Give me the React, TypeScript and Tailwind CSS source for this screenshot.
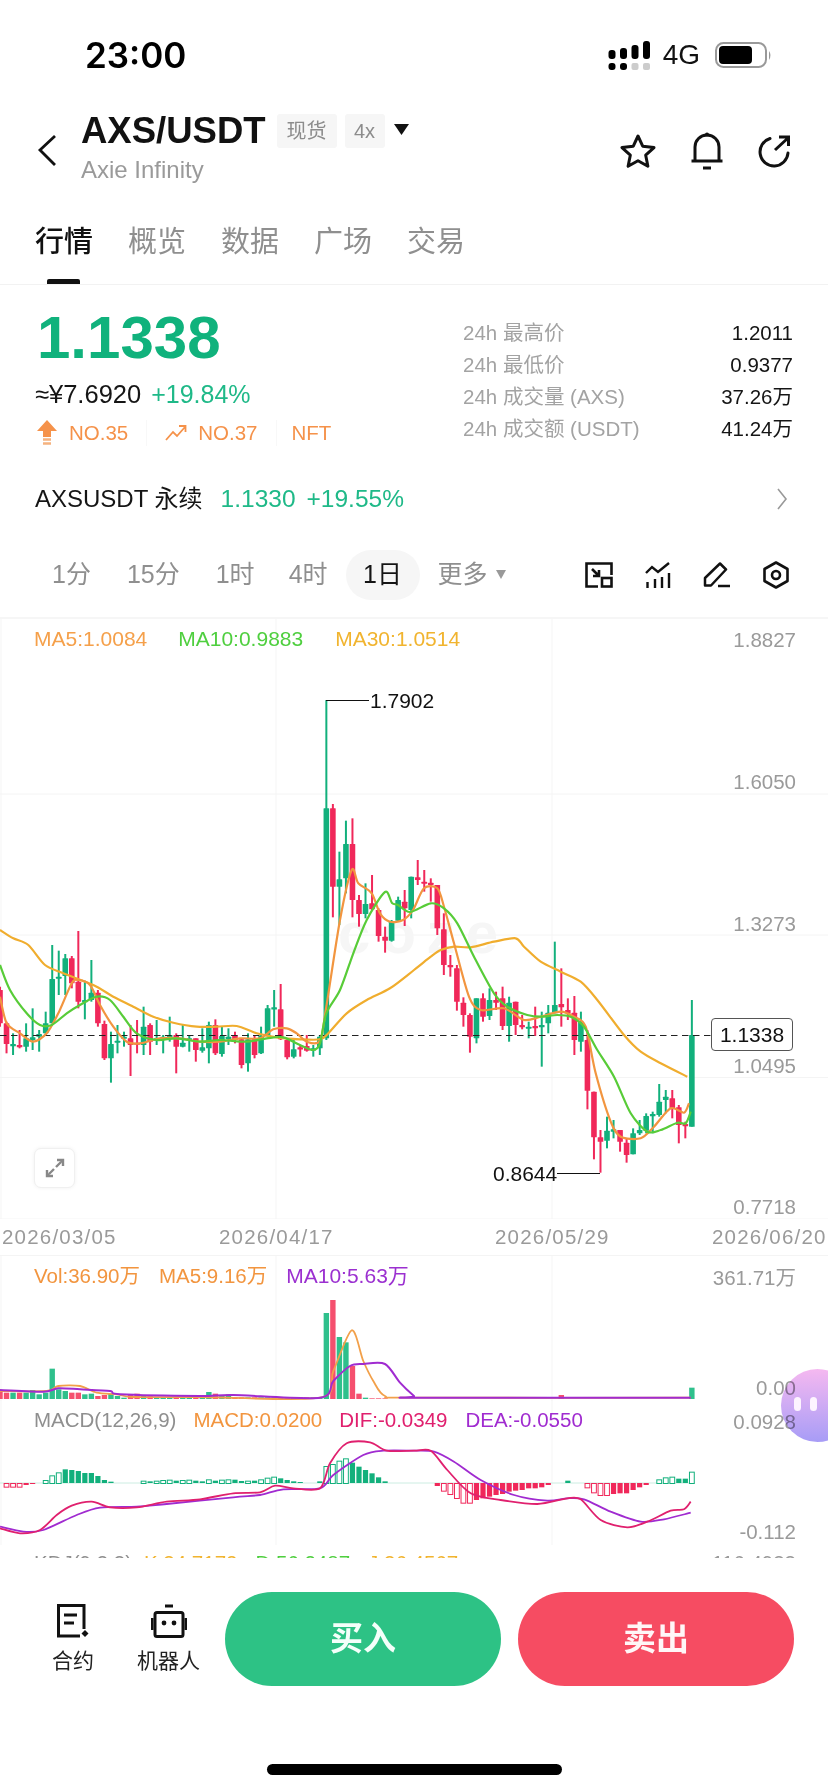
import React from "react";

const G = "#12b07c";
const R = "#f0285a";
type C = [string, number, number, number, number];

// colour, wick top, body top, body bottom, wick bottom (crop coordinates)
const part1: C[] = [
  ["r",920,930,1030,1040],["r",1025,1030,1092,1120],["g",1060,1092,1098,1125],["r",1050,1095,1102,1105],["g",1030,1075,1100,1115],
  ["g",985,1072,1080,1110],["g",1050,1062,1070,1115],["g",995,1030,1060,1065],["g",795,897,1030,1030],["g",812,890,895,945],
  ["g",822,835,888,945],["r",828,835,910,925],["r",753,905,965,985],["g",902,960,966,1018],["g",840,938,960,965],
  ["r",930,938,1030,1040],["r",1022,1032,1135,1140],["g",1055,1092,1135,1208],["g",1035,1082,1088,1120],["g",1055,1070,1075,1100],
  ["r",1035,1075,1095,1188],["r",1020,1088,1094,1120],["g",980,1040,1095,1125],["r",1030,1035,1085,1125],["g",1020,1075,1082,1095],
  ["g",1065,1070,1078,1120],["g",1010,1065,1072,1085],["r",1060,1065,1100,1180],["g",1035,1088,1100,1102],["g",1065,1075,1082,1115],
  ["r",1075,1075,1110,1145],["g",1045,1102,1112,1118],["g",1025,1035,1105,1150],["r",1018,1035,1120,1125],["g",1040,1068,1122,1130],
  ["g",1045,1070,1078,1095],["r",1055,1065,1080,1090],["r",1075,1078,1155,1165],["g",1060,1078,1150,1175],["r",1065,1075,1125,1135],
  ["g",1040,1068,1120,1122],["g",975,985,1065,1070],["g",930,982,988,1040],["r",912,988,1078,1080],["r",1075,1080,1132,1138],
  ["g",1080,1108,1130,1135],["r",1095,1102,1108,1130],["r",1065,1098,1112,1115],["g",1095,1105,1110,1130],["g",1065,1070,1105,1125],
  ["g",60,385,1075,1080],["r",372,385,620,712],["g",515,598,620,735],["g",422,492,595,640],["r",415,492,660,712],
  ["r",645,660,702,740],["g",610,672,702,715],["r",585,670,688,690],["r",685,690,768,785],["r",740,770,782,818],
  ["g",720,725,782,785],["g",650,660,722,725],["r",630,665,685,738],["g",590,590,690,715],
];
const part2: C[] = [
  ["r",120,172,180,195],["r",150,185,190,215],["r",175,188,195,245],["r",195,195,325,345],["r",280,328,435,465],
  ["r",405,435,442,470],["r",435,445,545,572],["r",532,548,585,620],["r",580,585,650,698],["g",535,535,655,670],
  ["r",520,535,590,605],["g",505,540,588,600],["r",515,540,548,570],["r",500,535,618,630],["g",530,548,618,665],
  ["r",545,545,615,645],["r",585,615,622,628],["g",605,620,625,655],["r",560,618,624,648],["g",575,615,622,740],
  ["g",555,578,610,640],["g",365,555,580,580],["r",445,552,562,620],["r",535,570,580,600],["r",528,578,660,705],
  ["g",575,605,665,695],["r",630,660,812,868],["r",815,815,952,1018],["r",930,952,965,1058],["g",890,932,962,985],
  ["g",900,928,935,955],["r",930,930,965,995],["r",955,968,1005,1028],["g",925,940,1003,1003],["g",900,930,940,945],
  ["g",880,888,932,940],["g",875,882,888,940],["g",792,845,885,890],["g",810,830,840,880],["r",810,835,865,895],
  ["r",855,862,915,970],["r",905,912,918,955],["g",540,645,920,920],
];
const candles = [
  ...part1.map((c) => [c[0], ...c.slice(1).map((v) => 680 + (v as number) / 3)]),
  ...part2.map((c) => [c[0], ...c.slice(1).map((v) => 820 + (v as number) / 3)]),
] as C[];
const cx = (i: number) => 6.527 * i;

const z3 = (p: number[][]) => p.map(([x, y]) => `${(x / 3).toFixed(1)},${(680 + y / 3).toFixed(1)}`).join(" ");
const z4 = (p: number[][]) => p.map(([x, y]) => `${(414 + x / 3).toFixed(1)},${(820 + y / 3).toFixed(1)}`).join(" ");
const z5 = (p: number[][]) => p.map(([x, y]) => `${(x / 3).toFixed(1)},${(1240 + y / 3).toFixed(1)}`).join(" ");
const z6 = (p: number[][]) => p.map(([x, y]) => `${(414 + x / 3).toFixed(1)},${(1240 + y / 3).toFixed(1)}`).join(" ");

// Catmull-Rom curve through the points
function smooth(points: string) {
  const p = points.trim().split(/\s+/).map((s) => s.split(",").map(Number));
  let d = `M${p[0][0]} ${p[0][1]}`;
  for (let i = 0; i < p.length - 1; i++) {
    const a = p[Math.max(i - 1, 0)], b = p[i], c = p[i + 1], e = p[Math.min(i + 2, p.length - 1)];
    const k = 1 / 7;
    d += ` C${(b[0] + (c[0] - a[0]) * k).toFixed(1)} ${(b[1] + (c[1] - a[1]) * k).toFixed(1)} ${(c[0] - (e[0] - b[0]) * k).toFixed(1)} ${(c[1] - (e[1] - b[1]) * k).toFixed(1)} ${c[0]} ${c[1]}`;
  }
  return d;
}

const ma30 = z3([[0,750],[40,775],[85,795],[135,855],[190,880],[280,915],[340,950],[400,980],[460,1010],[520,1028],[590,1040],[650,1040],[710,1038],[770,1060],[830,1072],[900,1078],[960,1078],[985,1060],[1040,1000],[1100,960],[1170,925],[1242,870]]) + " " +
  z4([[50,410],[80,390],[120,380],[170,382],[240,365],[305,355],[330,380],[380,425],[440,455],[500,485],[550,540],[630,645],[680,695],[740,730],[820,770]]);
const ma5 = z3([[0,950],[20,1030],[60,1060],[100,1085],[140,1060],[175,1000],[215,910],[235,900],[270,915],[300,975],[340,1040],[380,1085],[420,1090],[480,1075],[540,1075],[600,1085],[660,1085],[720,1075],[780,1075],[820,1048],[860,1045],[890,1060],[920,1085],[960,1082],[979,980],[1020,720],[1055,570],[1075,610],[1115,640],[1140,700],[1170,725]]) +
  " 403,920 413,910 " + z4([[30,205],[70,205],[90,260],[120,370],[165,530],[200,570],[270,565],[330,600],[380,590],[440,575],[480,590],[515,620],[545,760],[590,905],[620,950],[680,955],[720,920],[770,865],[810,878],[825,850]]);
const ma10 = z3([[0,855],[30,930],[80,1000],[120,1035],[155,1035],[200,1000],[240,975],[290,950],[330,960],[370,1010],[410,1060],[470,1080],[530,1075],[600,1085],[660,1080],[740,1085],[800,1075],[850,1072],[900,1095],[940,1110],[960,1090],[979,1000],[1020,930],[1060,820],[1100,720]]) +
  " 385,892 392,903 398,905 410,912 " + z4([[50,250],[90,265],[130,310],[180,410],[240,520],[280,560],[340,585],[380,590],[430,585],[470,590],[510,620],[550,690],[600,770],[650,880],[700,935],[740,930],[790,908],[815,910],[830,875]]);

const volTops: Record<number, number> = {0:452,1:455,2:455,3:455,4:455,5:447,6:460,7:455,8:383,9:445,10:450,11:455,12:455,13:460,14:458,15:465,16:462,17:458,18:465,19:470,20:462,21:458,22:465,23:466,32:453,33:458,34:462,35:460,50:216,51:177,52:288,53:304,54:375,55:458,56:470};
const vma5 = z5([[0,450],[140,450],[175,435],[240,435],[290,455],[350,460],[400,468],[600,468],[960,470],[1000,390],[1055,268],[1090,360],[1120,420],[1155,465],[1242,470]]) + " " + z6([[830,470]]);
const vma10 = z5([[0,447],[130,452],[175,442],[240,445],[330,450],[360,460],[600,465],[700,462],[960,470],[1000,420],[1050,375],[1090,369],[1155,369],[1200,425],[1242,465]]) + " " + z6([[10,470],[830,470]]);

// index, top or bottom value (crop y), solid?
const macd: [number, number, boolean][] = [
  [1,740,false],[2,740,false],[3,740,false],[4,735,true],[5,732,true],[7,720,false],[8,706,false],[9,697,false],[10,688,true],[11,690,true],[12,693,true],[13,699,true],[14,699,true],[15,708,true],[16,720,true],[17,725,true],
  [22,722,false],[23,724,true],[24,722,false],[25,720,false],[26,719,false],[27,722,true],[28,720,false],[29,719,false],[30,722,true],[31,724,true],[32,718,false],[33,722,true],[34,719,false],[35,718,false],[36,719,true],[37,723,true],[38,722,false],[39,722,true],[40,718,false],[41,713,false],[42,710,false],[43,715,true],[44,720,true],[45,724,true],[46,726,true],[49,724,true],
  [50,678,false],[51,672,false],[52,662,false],[53,655,false],[54,668,true],[55,680,true],[56,690,true],[57,700,true],[58,712,true],[59,724,true],
  [67,738,true],[68,752,false],[69,762,false],[70,774,false],[71,788,false],[72,788,false],[73,780,true],[74,775,true],[75,770,true],[76,765,true],[77,762,true],[78,755,true],[79,752,true],[80,750,true],[81,745,true],[82,745,true],[83,742,true],[84,735,true],[87,722,true],[90,742,false],[91,757,false],[92,765,false],[93,765,false],[94,762,true],[95,760,true],[96,760,true],[97,750,true],[98,742,true],[99,735,true],
  [101,718,false],[102,712,false],[103,710,false],[104,716,true],[105,716,true],[106,695,false],
];
const dif = z5([[0,865],[60,880],[120,870],[170,825],[215,797],[275,785],[330,802],[410,802],[500,785],[600,778],[700,760],[780,757],[825,737],[880,745],[960,745],[990,670],[1040,610],[1110,607],[1160,632],[1242,632]]) + " " + z6([[50,632],[100,690],[170,760],[260,780],[370,792],[460,775],[500,778],[560,840],[640,862],[700,845],[770,812],[810,808],[830,785]]);
const dea = z5([[0,860],[70,875],[130,870],[230,825],[300,803],[410,800],[500,792],[700,772],[780,765],[850,748],[960,745],[1000,705],[1090,645],[1150,632],[1242,632]]) + " " + z6([[60,635],[120,665],[200,720],[300,765],[400,782],[460,775],[510,778],[590,815],[680,845],[750,838],[830,818]]);

const sans = "[font-family:'Liberation_Sans','Noto_Sans_CJK_SC',sans-serif]";

function VGrid({ y1, y2 }: { y1: number; y2: number }) {
  return (
    <>
      <line x1="1" x2="1" y1={y1} y2={y2} stroke="#f5f5f5" strokeWidth="1" />
      <line x1="276" x2="276" y1={y1} y2={y2} stroke="#f5f5f5" strokeWidth="1" />
      <line x1="552" x2="552" y1={y1} y2={y2} stroke="#f5f5f5" strokeWidth="1" />
    </>
  );
}

function Axis({ y, children }: { y: number; children: React.ReactNode }) {
  return (
    <text x="796" y={y} textAnchor="end" dominantBaseline="central" fontSize="20.5" fill="#9a9a9a">
      {children}
    </text>
  );
}

function Line({ d, color, w }: { d: string; color: string; w: number }) {
  return <path d={smooth(d)} fill="none" stroke={color} strokeWidth={w} strokeLinejoin="round" />;
}

function Tab({ children, on }: { children: React.ReactNode; on?: boolean }) {
  return <span className={`text-[29px] leading-[36px] ${on ? "text-[#111] font-medium" : "text-[#8f8f8f]"}`}>{children}</span>;
}

function Stat({ label, value }: { label: string; value: string }) {
  return (
    <div className="flex h-[31.7px] items-center justify-between">
      <span className="text-[20.5px] text-[#a3a3a3]">{label}</span>
      <span className="text-[20.5px] text-[#151515]">{value}</span>
    </div>
  );
}

export default function App() {
  return (
    <div className={`relative flex h-[1792px] w-[828px] flex-col overflow-hidden bg-white ${sans}`}>
      {/* status bar */}
      <div className="flex h-[105px] shrink-0 items-start justify-between pt-[33px]">
        <span className="ml-[85px] text-[35px] leading-[44px] font-semibold text-black [font-family:Inter,sans-serif]">23:00</span>
        <div className="mr-[55px] mt-[4px] flex items-center">
          <svg width="44" height="32" viewBox="604 39 44 32" className="mt-[2px]">
            <rect x="605.5" y="49" width="7" height="9" rx="3" fill="#000" />
            <rect x="617" y="47" width="7" height="11" rx="3" fill="#000" />
            <rect x="628.5" y="44" width="7" height="14" rx="3" fill="#000" />
            <rect x="640" y="40" width="7" height="18" rx="3" fill="#000" />
            <rect x="605.5" y="62" width="7" height="7" rx="3" fill="#000" />
            <rect x="617" y="62" width="7" height="7" rx="3" fill="#000" />
            <rect x="628.5" y="62" width="7" height="7" rx="2" fill="#ccc" />
            <rect x="640" y="62" width="7" height="7" rx="2" fill="#ccc" />
          </svg>
          <span className="ml-[12px] text-[28px] leading-[36px] text-[#111]">4G</span>
          <svg width="58" height="28" viewBox="715 41 58 28" className="ml-[15px]">
            <rect x="716" y="43" width="50" height="24" rx="7.5" fill="none" stroke="#999" strokeWidth="2" />
            <rect x="719" y="46" width="33" height="18" rx="4" fill="#000" />
            <path d="M769 51 Q772 55 769 60 Z" fill="#999" />
          </svg>
        </div>
      </div>

      {/* header */}
      <div className="flex h-[100px] shrink-0 items-start">
        <svg width="24" height="36" viewBox="0 0 24 36" className="mt-[27px] ml-[35px]">
          <path d="M20 4 L5 18 L20 33" fill="none" stroke="#111" strokeWidth="2.8" />
        </svg>
        <div className="mt-[1px] ml-[22px] flex flex-col">
          <div className="flex items-center">
            <span className="text-[36.5px] leading-[50px] font-bold text-[#111]">AXS/USDT</span>
            <span className="ml-[11px] flex h-[34px] w-[60px] items-center justify-center rounded-[3px] bg-[#f6f6f6] text-[20px] text-[#8c8c8c]">现货</span>
            <span className="ml-[8px] flex h-[34px] w-[40px] items-center justify-center rounded-[3px] bg-[#f6f6f6] text-[20px] text-[#8c8c8c]">4x</span>
            <svg width="15" height="11" viewBox="0 0 15 11" className="mt-[-3px] ml-[9px]">
              <path d="M0 0 H15 L7.5 11 Z" fill="#111" />
            </svg>
          </div>
          <span className="mt-[-2px] text-[24px] leading-[32px] text-[#9a9a9a]">Axie Infinity</span>
        </div>
        <div className="ml-auto mr-[37px] mt-[27px] flex items-center">
          <svg width="36" height="36" viewBox="0 0 36 36">
            <path d="M18 3 L22.7 13.2 L34 14.6 L25.7 22.2 L27.9 33.2 L18 27.7 L8.1 33.2 L10.3 22.2 L2 14.6 L13.3 13.2 Z" fill="none" stroke="#111" strokeWidth="3" strokeLinejoin="round" />
          </svg>
          <svg width="34" height="38" viewBox="0 0 34 38" className="ml-[34px]">
            <path d="M5 28 V15 A12 12 0 0 1 29 15 V28" fill="none" stroke="#111" strokeWidth="3" />
            <path d="M1.5 29 H32.5" stroke="#111" strokeWidth="3" />
            <path d="M13 36 H21" stroke="#111" strokeWidth="3" />
            <circle cx="17" cy="2.5" r="2" fill="#111" />
          </svg>
          <svg width="34" height="34" viewBox="0 0 34 34" className="ml-[33px]">
            <path d="M13 4.5 A14 14 0 1 0 31 19" fill="none" stroke="#111" strokeWidth="3" strokeLinecap="round" />
            <path d="M18 16 L31 4 M22 3 H31.5 V12" fill="none" stroke="#111" strokeWidth="3" />
          </svg>
        </div>
      </div>

      {/* tabs */}
      <div className="relative flex h-[80px] shrink-0 items-start gap-[35px] border-b border-[#f2f2f2] pt-[19px] pl-[35px]">
        <Tab on>行情</Tab>
        <Tab>概览</Tab>
        <Tab>数据</Tab>
        <Tab>广场</Tab>
        <Tab>交易</Tab>
        <div className="absolute bottom-0 left-[47px] h-[5px] w-[33px] rounded-t-[2px] bg-[#111]" />
      </div>

      {/* price block */}
      <div className="flex h-[179px] shrink-0">
        <div className="ml-[37px] flex w-[426px] flex-col">
          <span className="mt-[20px] text-[60px] leading-[66px] font-bold text-[#10b27c]">1.1338</span>
          <div className="mt-[8px] flex items-center">
            <span className="ml-[-2px] text-[25.5px] leading-[30px] text-[#151515]">≈¥7.6920</span>
            <span className="ml-[10px] text-[25px] leading-[30px] text-[#1fb988]">+19.84%</span>
          </div>
          <div className="mt-[10px] flex items-center text-[20.5px] leading-[28px] text-[#f5924a]">
            <svg width="22" height="26" viewBox="0 0 22 26" className="ml-[-1px]">
              <path d="M11 0 L21 11 H15 V17 H7 V11 H1 Z" fill="#f5924a" />
              <path d="M7 19.5 H15 M7 23.5 H15" stroke="#f5b27f" strokeWidth="2.4" />
            </svg>
            <span className="ml-[11px]">NO.35</span>
            <div className="mx-[18px] h-[26px] w-px bg-[#f8f8f8]" />
            <svg width="22" height="18" viewBox="0 0 22 18">
              <path d="M1 16 L8 8 L12 12 L20 3 M14 2 H20.5 V8" fill="none" stroke="#f5924a" strokeWidth="1.8" />
            </svg>
            <span className="ml-[11px]">NO.37</span>
            <div className="mx-[18px] h-[26px] w-px bg-[#f8f8f8]" />
            <span className="ml-[-3px]">NFT</span>
          </div>
        </div>
        <div className="mr-[35px] mt-[33px] flex flex-1 flex-col">
          <Stat label="24h 最高价" value="1.2011" />
          <Stat label="24h 最低价" value="0.9377" />
          <Stat label="24h 成交量 (AXS)" value="37.26万" />
          <Stat label="24h 成交额 (USDT)" value="41.24万" />
        </div>
      </div>

      {/* perpetual row */}
      <div className="flex h-[70px] shrink-0 items-center pr-[40px] pl-[35px] text-[24px]">
        <span className="text-[#151515]">AXSUSDT 永续</span>
        <span className="ml-[18px] text-[24.5px] text-[#1fb988]">1.1330</span>
        <span className="ml-[11px] text-[24.5px] text-[#1fb988]">+19.55%</span>
        <svg width="12" height="22" viewBox="0 0 12 22" className="ml-auto">
          <path d="M2 1 L10 11 L2 21" fill="none" stroke="#999" strokeWidth="1.6" />
        </svg>
      </div>

      {/* timeframe row */}
      <div className="flex h-[83px] shrink-0 items-center pb-[2px] text-[25px] text-[#8f8f8f]">
        <span className="ml-[52px]">1分</span>
        <span className="ml-[36px]">15分</span>
        <span className="ml-[36px]">1时</span>
        <span className="ml-[34px]">4时</span>
        <span className="ml-[18px] flex h-[50px] w-[74px] items-center justify-center rounded-full bg-[#f6f6f6] text-[#151515]">1日</span>
        <span className="ml-[18px]">更多</span>
        <svg width="10" height="9" viewBox="0 0 10 9" className="ml-[8px]">
          <path d="M0 0 H10 L5 9 Z" fill="#999" />
        </svg>
        <svg width="28" height="26" viewBox="0 0 28 26" className="ml-[79px]">
          <path d="M13 24.5 H1.5 V1.5 H26.5 V13" fill="none" stroke="#111" strokeWidth="2.6" />
          <rect x="17" y="16" width="9.5" height="8.5" fill="none" stroke="#111" strokeWidth="2.6" />
          <path d="M7 7 L14 14 M14 8 V14 H8" fill="none" stroke="#111" strokeWidth="2.6" />
        </svg>
        <svg width="26" height="26" viewBox="0 0 26 26" className="ml-[32px]">
          <path d="M1 11 L7 5 L13 10 L24 1" fill="none" stroke="#111" strokeWidth="2.4" />
          <path d="M2.5 20 V26 M10 17 V26 M17 15 V26 M24 11 V26" stroke="#111" strokeWidth="2.4" />
        </svg>
        <svg width="28" height="26" viewBox="0 0 28 26" className="ml-[32px]">
          <path d="M2 16 L17 1.5 L23 7.5 L8 23.5 H2 Z" fill="none" stroke="#111" strokeWidth="2.5" strokeLinejoin="round" />
          <path d="M15 24 H27" stroke="#111" strokeWidth="2.5" />
        </svg>
        <svg width="26" height="28" viewBox="0 0 26 28" className="ml-[32px]">
          <path d="M13 1.5 L24.5 8 V20 L13 26.5 L1.5 20 V8 Z" fill="none" stroke="#111" strokeWidth="2.6" strokeLinejoin="round" />
          <circle cx="13" cy="14" r="4" fill="none" stroke="#111" strokeWidth="2.6" />
        </svg>
      </div>

      {/* charts */}
      <div className="relative h-[941px] shrink-0 overflow-hidden border-t-[2px] border-[#f6f6f6]">
        {/* main panel */}
        <div className="relative h-[600px]">
          <div className="absolute top-[6px] left-[34px] flex text-[21px] leading-[28px]">
            <span className="text-[#f5a04a]">MA5:1.0084</span>
            <span className="ml-[31px] text-[#4fcf3f]">MA10:0.9883</span>
            <span className="ml-[32px] text-[#f1b42f]">MA30:1.0514</span>
          </div>
          <svg width="828" height="600" viewBox="0 619 828 600" className="block">
            <VGrid y1={619} y2={1219} />
            <line x1="0" x2="828" y1="794" y2="794" stroke="#f4f4f4" />
            <line x1="0" x2="828" y1="935" y2="935" stroke="#f4f4f4" />
            <line x1="0" x2="828" y1="1077.5" y2="1077.5" stroke="#f4f4f4" />
            <line x1="0" x2="828" y1="1219" y2="1219" stroke="#f4f4f4" />
            <text x="338" y="953" fontSize="58" fontWeight="700" fill="#f6f6f6" textLength="160">coze</text>
            <Axis y={639}>1.8827</Axis>
            <Axis y={781}>1.6050</Axis>
            <Axis y={923}>1.3273</Axis>
            <Axis y={1065}>1.0495</Axis>
            <Axis y={1206}>0.7718</Axis>
            {candles.map((c, i) => {
              const col = c[0] === "g" ? G : R;
              const x = cx(i);
              return (
                <g key={i}>
                  <line x1={x} x2={x} y1={c[1]} y2={c[4]} stroke={col} strokeWidth="2" />
                  <rect x={x - 2.8} y={c[2]} width="5.6" height={Math.max(c[3] - c[2], 2.2)} fill={col} rx="0.5" />
                </g>
              );
            })}
            <line x1="0" x2="711" y1="1035.5" y2="1035.5" stroke="#222" strokeWidth="1" strokeDasharray="6.5 4.5" />
            <Line d={ma30} color="#f0ad2e" w={2.2} />
            <Line d={ma5} color="#f2953f" w={2.2} />
            <Line d={ma10} color="#58cc38" w={2.2} />
            <path d="M326 700.5 H369" stroke="#111" strokeWidth="1" />
            <text x="370" y="700" dominantBaseline="central" fontSize="21" fill="#111">1.7902</text>
            <path d="M557 1173.5 H600" stroke="#111" strokeWidth="1" />
            <text x="493" y="1173" dominantBaseline="central" fontSize="21" fill="#111">0.8644</text>
          </svg>
          <div className="absolute top-[399px] left-[711px] flex h-[33px] w-[82px] items-center justify-center rounded-[4px] border border-[#555] bg-white text-[21px] text-[#111]">1.1338</div>
          <div className="absolute top-[529px] left-[34px] flex h-[40px] w-[41px] items-center justify-center rounded-[7px] border border-[#f0f0f0] bg-white shadow-[0_0_4px_rgba(0,0,0,0.06)]">
            <svg width="20" height="20" viewBox="0 0 20 20">
              <path d="M11 9 L16 4 M12 2 H18 V8 M9 11 L4 16 M2 12 V18 H8" fill="none" stroke="#888" strokeWidth="2.4" />
              <path d="M13 1 H19 V7 Z M1 13 V19 H7 Z" fill="#888" />
            </svg>
          </div>
        </div>

        {/* date axis */}
        <div className="relative flex h-[36px] items-center text-[20.5px] tracking-[1.2px] text-[#9a9a9a]">
          <span className="absolute left-[2px]">2026/03/05</span>
          <span className="absolute left-[219px]">2026/04/17</span>
          <span className="absolute left-[495px]">2026/05/29</span>
          <span className="absolute left-[712px] whitespace-nowrap">2026/06/20</span>
        </div>

        {/* volume panel */}
        <div className="relative h-[145px] border-t border-[#f4f4f4]">
          <div className="absolute top-[6px] left-[34px] flex text-[20.5px] leading-[28px]">
            <span className="text-[#f2953f]">Vol:36.90万</span>
            <span className="ml-[19px] text-[#f2953f]">MA5:9.16万</span>
            <span className="ml-[19px] text-[21px] text-[#9b30d0]">MA10:5.63万</span>
          </div>
          <svg width="828" height="145" viewBox="0 1255 828 145" className="block">
            <VGrid y1={1255} y2={1400} />
            <Axis y={1276}>361.71万</Axis>
            <Axis y={1386}>0.00</Axis>
            {Array.from({ length: 107 }, (_, i) => {
              const col = candles[i][0] === "g" ? "#2fc08c" : "#f5506e";
              const zt = i === 106 ? 440 : i === 86 ? 462 : volTops[i] ?? (i < 50 ? 469 : 472);
              if (i >= 60 && i !== 106 && i !== 86) return null;
              const y = 1240 + zt / 3;
              return <rect key={i} x={cx(i) - 2.7} y={y} width="5.4" height={1398 - y} fill={col} />;
            })}
            <Line d={vma5} color="#f2a04a" w={1.8} />
            <Line d={vma10} color="#a02bd0" w={2} />
          </svg>
        </div>

        {/* MACD panel */}
        <div className="relative h-[145px]">
          <div className="absolute top-[6px] left-[34px] flex text-[20.5px] leading-[28px]">
            <span className="text-[#8f8f8f]">MACD(12,26,9)</span>
            <span className="ml-[17px] text-[#f2953f]">MACD:0.0200</span>
            <span className="ml-[17px] text-[#e0206e]">DIF:-0.0349</span>
            <span className="ml-[18px] text-[#a02bd0]">DEA:-0.0550</span>
          </div>
          <svg width="828" height="145" viewBox="0 1400 828 145" className="block">
            <VGrid y1={1400} y2={1545} />
            <Axis y={1421}>0.0928</Axis>
            <Axis y={1531}>-0.112</Axis>
            <line x1="0" x2="695" y1="1483" y2="1483" stroke="#bfe9da" strokeWidth="0.8" />
            {macd.map(([i, v, solid]) => {
              const y = 1240 + v / 3;
              const top = Math.min(y, 1483);
              const h = Math.abs(y - 1483);
              const col = v < 728 ? G : R;
              return solid ? (
                <rect key={i} x={cx(i) - 2.6} y={top} width="5.2" height={h} fill={col} />
              ) : (
                <rect key={i} x={cx(i) - 2.4} y={top + 0.5} width="4.8" height={h} fill="white" stroke={col} strokeWidth="1" />
              );
            })}
            <Line d={dea} color="#a02bd0" w={1.8} />
            <Line d={dif} color="#e0206e" w={1.8} />
          </svg>
        </div>

        {/* clipped next panel */}
        <div className="relative h-[14px] overflow-hidden">
          <div className="absolute top-[4px] left-[34px] flex text-[20.5px] leading-[28px]">
            <span className="text-[#8f8f8f]">KDJ(9,3,3)</span>
            <span className="ml-[12px] text-[#f1b42f]">K:34.7172</span>
            <span className="ml-[18px] text-[#4fcf3f]">D:56.2487</span>
            <span className="ml-[18px] text-[#f1b42f]">J:36.4567</span>
          </div>
          <span className="absolute top-[4px] right-[32px] text-[20.5px] leading-[28px] text-[#9a9a9a]">116.4933</span>
        </div>
      </div>

      {/* footer */}
      <div className="relative flex flex-1 flex-col bg-white">
        <div className="flex items-start pt-[34px]">
          <div className="ml-[52px] flex w-[42px] flex-col items-center">
            <svg width="32" height="34" viewBox="0 0 32 34" className="mt-[12px]">
              <path d="M27 25 V1.5 H1.5 V32 H23" fill="none" stroke="#111" strokeWidth="3" />
              <path d="M7 11 H20 M7 19 H17" stroke="#111" strokeWidth="2.8" />
              <path d="M28 26 L31.5 29.5 L28 33 L24.5 29.5 Z" fill="#111" />
            </svg>
            <span className="mt-[10px] text-[21px] leading-[26px] whitespace-nowrap text-[#222]">合约</span>
          </div>
          <div className="ml-[43px] flex w-[63px] flex-col items-center">
            <svg width="36" height="34" viewBox="0 0 36 34" className="mt-[12px]">
              <path d="M14 2 H22" stroke="#111" strokeWidth="3" />
              <rect x="4" y="8.5" width="28" height="24" rx="2" fill="none" stroke="#111" strokeWidth="3" />
              <path d="M1 14 V26 M35 14 V26" stroke="#111" strokeWidth="3" />
              <circle cx="13" cy="19" r="2.4" fill="#111" />
              <circle cx="23" cy="19" r="2.4" fill="#111" />
            </svg>
            <span className="mt-[10px] text-[21px] leading-[26px] whitespace-nowrap text-[#222]">机器人</span>
          </div>
          <div className="ml-[25px] flex h-[94px] w-[276px] items-center justify-center rounded-full bg-[#2dc285] text-[33px] font-bold text-[#f4fffa]">买入</div>
          <div className="ml-[17px] flex h-[94px] w-[276px] items-center justify-center rounded-full bg-[#f64c62] text-[33px] font-bold text-[#fff6f7]">卖出</div>
        </div>
        <div className="absolute top-[206px] left-[267px] h-[11px] w-[295px] rounded-full bg-black" />
      </div>

      {/* floating assistant */}
      <div className="absolute top-[1369px] left-[781px] h-[73px] w-[73px]">
        <div className="h-full w-full rounded-full bg-gradient-to-b from-[#f5b8f0] to-[#a79cf6] mix-blend-multiply" />
        <div className="absolute top-[28px] left-[13px] h-[14px] w-[7px] rounded-full bg-[#fdf4ff]" />
        <div className="absolute top-[28px] left-[29px] h-[14px] w-[7px] rounded-full bg-[#fdf4ff]" />
      </div>
    </div>
  );
}
